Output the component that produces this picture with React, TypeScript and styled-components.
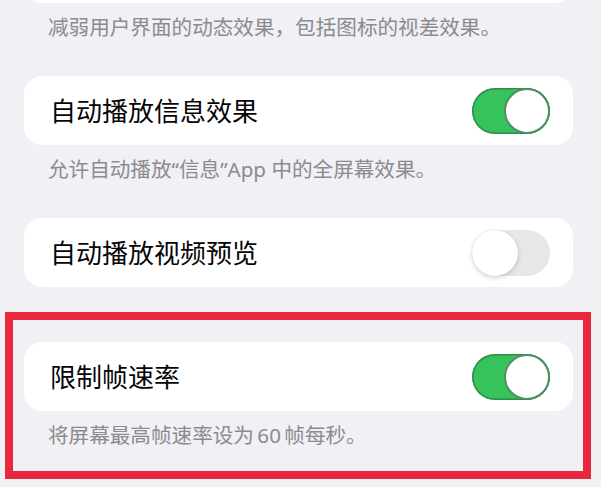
import React from "react";
import styled, { createGlobalStyle } from "styled-components";

const GlobalStyle = createGlobalStyle`
  html, body {
    margin: 0;
    padding: 0;
    background: #f0f0f5;
  }
  body {
    font-family: "Noto Sans", "Noto Sans CJK SC", sans-serif;
  }
`;

const Page = styled.div`
  width: 601px;
  height: 487px;
  overflow: hidden;
  display: flex;
  flex-direction: column;
  background: #f0f0f5;
`;

const Section = styled.div<{ $after: number }>`
  margin: 0 28px ${(p) => p.$after}px 24px;
  display: flex;
  flex-direction: column;
`;

const Card = styled.div<{ $cut?: boolean }>`
  height: 69px;
  margin-top: ${(p) => (p.$cut ? "-66px" : "0")};
  box-sizing: border-box;
  padding: 0 23px 0 26px;
  background: #ffffff;
  border-radius: 18px;
  display: flex;
  align-items: center;
  justify-content: space-between;
`;

const Label = styled.span`
  font-size: 26px;
  line-height: 32px;
  color: #050505;
`;

const Note = styled.div`
  padding: 12px 0 0 24px;
  font-size: 20.6px;
  line-height: 24px;
  color: #8b8b90;
`;

const Highlight = styled.div`
  margin: 0 10px 0 5px;
  border: 8px solid #e8283f;
  padding: 22px 10px 24px 11px;
  display: flex;
  flex-direction: column;
`;

const Track = styled.span<{ $on: boolean }>`
  width: 78px;
  height: 46px;
  box-sizing: border-box;
  border-radius: 23px;
  display: flex;
  align-items: center;
  justify-content: ${(p) => (p.$on ? "flex-end" : "flex-start")};
  background: ${(p) => (p.$on ? "#36c35b" : "#e7e7e9")};
  box-shadow: ${(p) =>
    p.$on ? "inset 0 0 0 1.5px rgba(48, 120, 72, 0.75)" : "none"};
`;

const Knob = styled.span<{ $on: boolean }>`
  width: 46px;
  height: 46px;
  box-sizing: border-box;
  border-radius: 50%;
  background: #ffffff;
  border: ${(p) => (p.$on ? "2px solid #4f8e66" : "none")};
  box-shadow: ${(p) =>
    p.$on
      ? "none"
      : "0 2px 5px rgba(0, 0, 0, 0.16), 0 0 0 0.5px rgba(0, 0, 0, 0.06)"};
`;

function Toggle({ on }: { on: boolean }) {
  return (
    <Track $on={on}>
      <Knob $on={on} />
    </Track>
  );
}

export default function App() {
  return (
    <>
      <GlobalStyle />
      <Page>
        <Section $after={37}>
          <Card $cut />
          <Note>减弱用户界面的动态效果，包括图标的视差效果。</Note>
        </Section>
        <Section $after={37}>
          <Card>
            <Label>自动播放信息效果</Label>
            <Toggle on />
          </Card>
          <Note>允许自动播放“信息”App 中的全屏幕效果。</Note>
        </Section>
        <Section $after={25}>
          <Card>
            <Label>自动播放视频预览</Label>
            <Toggle on={false} />
          </Card>
        </Section>
        <Highlight>
          <Card>
            <Label>限制帧速率</Label>
            <Toggle on />
          </Card>
          <Note>将屏幕最高帧速率设为{"\u2009"}60{"\u2009"}帧每秒。</Note>
        </Highlight>
      </Page>
    </>
  );
}
